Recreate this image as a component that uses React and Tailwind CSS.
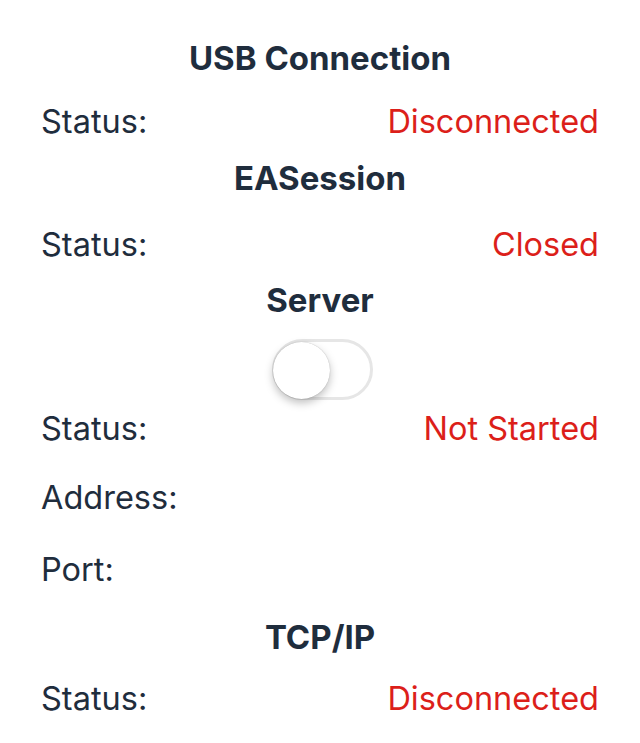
import { useState } from 'react';

const FONT = { fontFamily: 'Inter, "Noto Sans", sans-serif' };

function Heading({ children, mt }) {
  return (
    <div className={`h-[40px] flex items-center justify-center text-[33px] font-bold text-[#1f2d3d] ${mt}`}>
      {children}
    </div>
  );
}

function Row({ label, value, mt }) {
  return (
    <div className={`h-[40px] flex items-center justify-between text-[32.5px] text-[#1f2d3d] ${mt}`}>
      <span>{label}</span>
      {value && <span className="text-[#dc1f1a]">{value}</span>}
    </div>
  );
}

export default function App() {
  const [on, setOn] = useState(false);

  return (
    <div className="w-[640px] h-[743px] bg-white px-[41px] pt-[39px] overflow-hidden" style={FONT}>
      <Heading>USB Connection</Heading>
      <Row label="Status:" value="Disconnected" mt="mt-[23px]" />

      <Heading mt="mt-[17px]">EASession</Heading>
      <Row label="Status:" value="Closed" mt="mt-[26px]" />

      <Heading mt="mt-[16px]">Server</Heading>
      {/* toggle */}
      <div className="h-[62px] mt-[17px] flex items-center justify-center">
        <button
          onClick={() => setOn(!on)}
          className={`relative ml-[5px] w-[101px] h-[61px] rounded-full border-[3px] ${on ? 'bg-[#4cd964] border-[#4cd964]' : 'bg-white border-[#e6e6e6]'}`}
        >
          <span
            className={`absolute top-[0px] w-[57px] h-[57px] rounded-full bg-white shadow-[0_4px_8px_rgba(0,0,0,0.25),0_0_1px_rgba(0,0,0,0.3)] ${on ? 'left-[38px]' : 'left-[-2px]'}`}
          />
        </button>
      </div>
      <Row label="Status:" value="Not Started" mt="mt-[9px]" />
      <Row label="Address:" mt="mt-[29px]" />
      <Row label="Port:" mt="mt-[32px]" />

      <Heading mt="mt-[28px]">TCP/IP</Heading>
      <Row label="Status:" value="Disconnected" mt="mt-[21px]" />
    </div>
  );
}
